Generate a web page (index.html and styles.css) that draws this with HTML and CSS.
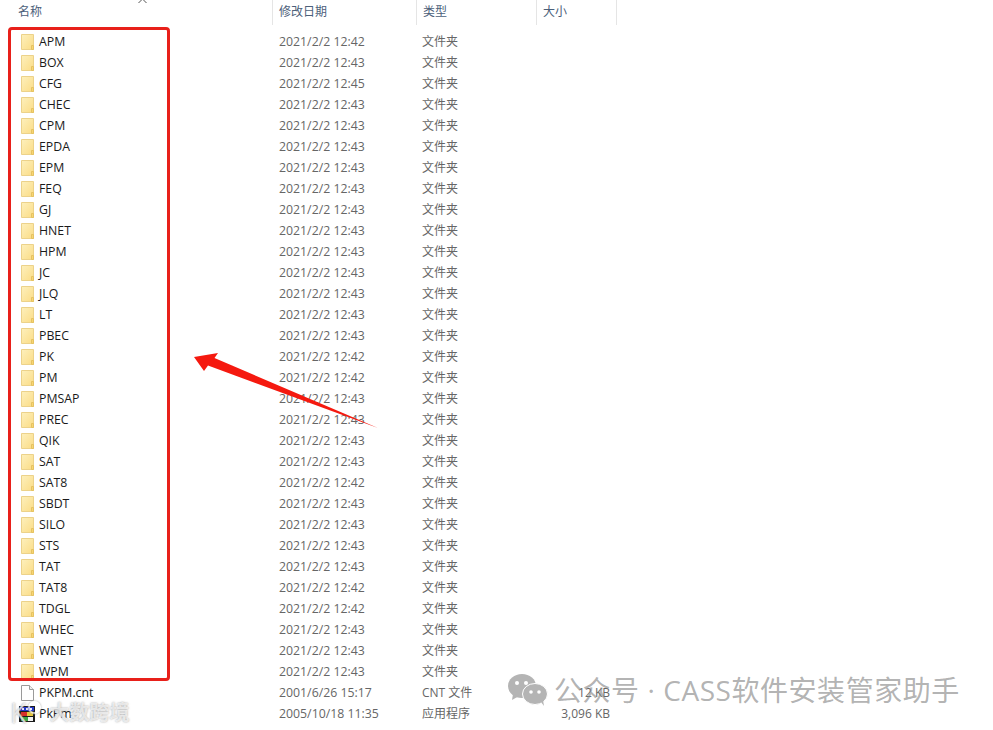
FILE: index.html
```html
<!DOCTYPE html>
<html lang="en">
<head>
    <meta charset="UTF-8">
    <title>PKPM</title>
    <link rel="stylesheet" href="styles.css">
</head>
<body>
    <svg class="defs" width="0" height="0">
        <linearGradient id="folder-fill" x1="0" y1="0" x2="1" y2="1">
            <stop offset="0" stop-color="#fdf0bd"/>
            <stop offset="1" stop-color="#fbdc85"/>
        </linearGradient>
        <symbol id="folder" viewBox="0 0 13 16">
            <path d="M.5.500h12v15H.5z" fill="url(#folder-fill)" stroke="#ecd28a"/>
            <path d="M10.500 15.500v-4h2v4z" fill="#f7d672" stroke="#e6c262"/>
        </symbol>
    </svg>

    <div class="explorer">
        <div class="row head">
            <div class="cell name-head">名称<svg class="sort" width="9" height="5" viewBox="0 0 9 5"><path d="M.5 4l4-4 4 4" fill="none" stroke="#555"/></svg></div>
            <div class="cell">修改日期</div>
            <div class="cell">类型</div>
            <div class="cell last">大小</div>
        </div>

        <div class="row"><div class="name"><svg class="icon"><use href="#folder"/></svg>APM</div><div class="date">2021/2/2 12:42</div><div class="type">文件夹</div></div>
        <div class="row"><div class="name"><svg class="icon"><use href="#folder"/></svg>BOX</div><div class="date">2021/2/2 12:43</div><div class="type">文件夹</div></div>
        <div class="row"><div class="name"><svg class="icon"><use href="#folder"/></svg>CFG</div><div class="date">2021/2/2 12:45</div><div class="type">文件夹</div></div>
        <div class="row"><div class="name"><svg class="icon"><use href="#folder"/></svg>CHEC</div><div class="date">2021/2/2 12:43</div><div class="type">文件夹</div></div>
        <div class="row"><div class="name"><svg class="icon"><use href="#folder"/></svg>CPM</div><div class="date">2021/2/2 12:43</div><div class="type">文件夹</div></div>
        <div class="row"><div class="name"><svg class="icon"><use href="#folder"/></svg>EPDA</div><div class="date">2021/2/2 12:43</div><div class="type">文件夹</div></div>
        <div class="row"><div class="name"><svg class="icon"><use href="#folder"/></svg>EPM</div><div class="date">2021/2/2 12:43</div><div class="type">文件夹</div></div>
        <div class="row"><div class="name"><svg class="icon"><use href="#folder"/></svg>FEQ</div><div class="date">2021/2/2 12:43</div><div class="type">文件夹</div></div>
        <div class="row"><div class="name"><svg class="icon"><use href="#folder"/></svg>GJ</div><div class="date">2021/2/2 12:43</div><div class="type">文件夹</div></div>
        <div class="row"><div class="name"><svg class="icon"><use href="#folder"/></svg>HNET</div><div class="date">2021/2/2 12:43</div><div class="type">文件夹</div></div>
        <div class="row"><div class="name"><svg class="icon"><use href="#folder"/></svg>HPM</div><div class="date">2021/2/2 12:43</div><div class="type">文件夹</div></div>
        <div class="row"><div class="name"><svg class="icon"><use href="#folder"/></svg>JC</div><div class="date">2021/2/2 12:43</div><div class="type">文件夹</div></div>
        <div class="row"><div class="name"><svg class="icon"><use href="#folder"/></svg>JLQ</div><div class="date">2021/2/2 12:43</div><div class="type">文件夹</div></div>
        <div class="row"><div class="name"><svg class="icon"><use href="#folder"/></svg>LT</div><div class="date">2021/2/2 12:43</div><div class="type">文件夹</div></div>
        <div class="row"><div class="name"><svg class="icon"><use href="#folder"/></svg>PBEC</div><div class="date">2021/2/2 12:43</div><div class="type">文件夹</div></div>
        <div class="row"><div class="name"><svg class="icon"><use href="#folder"/></svg>PK</div><div class="date">2021/2/2 12:42</div><div class="type">文件夹</div></div>
        <div class="row"><div class="name"><svg class="icon"><use href="#folder"/></svg>PM</div><div class="date">2021/2/2 12:42</div><div class="type">文件夹</div></div>
        <div class="row"><div class="name"><svg class="icon"><use href="#folder"/></svg>PMSAP</div><div class="date">2021/2/2 12:43</div><div class="type">文件夹</div></div>
        <div class="row"><div class="name"><svg class="icon"><use href="#folder"/></svg>PREC</div><div class="date">2021/2/2 12:43</div><div class="type">文件夹</div></div>
        <div class="row"><div class="name"><svg class="icon"><use href="#folder"/></svg>QIK</div><div class="date">2021/2/2 12:43</div><div class="type">文件夹</div></div>
        <div class="row"><div class="name"><svg class="icon"><use href="#folder"/></svg>SAT</div><div class="date">2021/2/2 12:43</div><div class="type">文件夹</div></div>
        <div class="row"><div class="name"><svg class="icon"><use href="#folder"/></svg>SAT8</div><div class="date">2021/2/2 12:42</div><div class="type">文件夹</div></div>
        <div class="row"><div class="name"><svg class="icon"><use href="#folder"/></svg>SBDT</div><div class="date">2021/2/2 12:43</div><div class="type">文件夹</div></div>
        <div class="row"><div class="name"><svg class="icon"><use href="#folder"/></svg>SILO</div><div class="date">2021/2/2 12:43</div><div class="type">文件夹</div></div>
        <div class="row"><div class="name"><svg class="icon"><use href="#folder"/></svg>STS</div><div class="date">2021/2/2 12:43</div><div class="type">文件夹</div></div>
        <div class="row"><div class="name"><svg class="icon"><use href="#folder"/></svg>TAT</div><div class="date">2021/2/2 12:43</div><div class="type">文件夹</div></div>
        <div class="row"><div class="name"><svg class="icon"><use href="#folder"/></svg>TAT8</div><div class="date">2021/2/2 12:42</div><div class="type">文件夹</div></div>
        <div class="row"><div class="name"><svg class="icon"><use href="#folder"/></svg>TDGL</div><div class="date">2021/2/2 12:42</div><div class="type">文件夹</div></div>
        <div class="row"><div class="name"><svg class="icon"><use href="#folder"/></svg>WHEC</div><div class="date">2021/2/2 12:43</div><div class="type">文件夹</div></div>
        <div class="row"><div class="name"><svg class="icon"><use href="#folder"/></svg>WNET</div><div class="date">2021/2/2 12:43</div><div class="type">文件夹</div></div>
        <div class="row"><div class="name"><svg class="icon"><use href="#folder"/></svg>WPM</div><div class="date">2021/2/2 12:43</div><div class="type">文件夹</div></div>
        <div class="row">
            <div class="name">
                <svg class="icon" viewBox="0 0 13 16"><path d="M.5.500h8l4 4v11H.5z" fill="#fff" stroke="#9a9a9a"/><path d="M8.500.500v4h4" fill="#eee" stroke="#9a9a9a"/></svg>
                PKPM.cnt
            </div>
            <div class="date">2001/6/26 15:17</div>
            <div class="type">CNT 文件</div>
            <div class="size">12 KB</div>
        </div>
        <div class="row">
            <div class="name">
                <svg class="icon app" viewBox="0 0 16 16"><path d="M0 0h16v16H0z" fill="#1b1b1b"/><path d="M1 1h14v4H1z" fill="#2438c8"/><path d="M3 2h2v2H3zM7 2h2v2H7zM11 2h2v2h-2z" fill="#e8e8f8"/><path d="M2 6h6v4H2z" fill="#d8302a"/><path d="M8 6h6v4H8z" fill="#e8c83a"/><path d="M2 11h7v4H2z" fill="#3aa845"/><path d="M9 11h5v4H9z" fill="#f2f2f2"/></svg>
                PkPm
            </div>
            <div class="date">2005/10/18 11:35</div>
            <div class="type">应用程序</div>
            <div class="size">3,096 KB</div>
        </div>
    </div>

    <!-- annotations on top of the screenshot -->
    <div class="red-box"></div>
    <svg class="arrow" width="190" height="80" viewBox="0 0 190 80">
        <path d="M1 4L25 0 21.500 5 185 75 15 12.500 11 18z" fill="#f5190f"/>
    </svg>

    <div class="mark">
        <svg width="40" height="32" viewBox="0 0 40 32">
            <ellipse cx="14" cy="12" rx="14" ry="12" fill="#b4b4b4"/>
            <path d="M5 20l-1 6 7-4z" fill="#b4b4b4"/>
            <ellipse cx="27" cy="20" rx="12.500" ry="10.500" fill="#b4b4b4" stroke="#fff"/>
            <path d="M33 28l3 4-1-6z" fill="#b4b4b4"/>
            <circle cx="9" cy="9" r="2" fill="#fff"/><circle cx="18" cy="9" r="2" fill="#fff"/>
            <circle cx="23" cy="18" r="1.800" fill="#fff"/><circle cx="31" cy="18" r="1.800" fill="#fff"/>
        </svg>
        <span>公众号 · CASS软件安装管家助手</span>
    </div>
    <div class="mark-left"><span class="k">K</span><span class="dot"></span>大数跨境</div>
</body>
</html>
```

FILE: styles.css
```css
body {
    margin: 0;
    height: 730px;
    overflow: hidden;
    position: relative;
    background: #fff;
    font-family: "Open Sans", "Noto Sans CJK SC", sans-serif;
    font-size: 12px;
    color: #666;
}

.defs {
    display: block;
}

.explorer {
    display: flex;
    flex-direction: column;
}

/* Rows */
.row {
    display: grid;
    grid-template-columns: 272px 144px 120px 81px;
    height: 21px;
    line-height: 21px;
}

.head {
    height: 25px;
    line-height: 23px;
    margin-bottom: 6px;
    color: #4c607a;
}

.cell {
    padding-left: 6px;
    border-left: 1px solid #e5e5e5;
}

.cell.last {
    border-right: 1px solid #e5e5e5;
}

.name-head {
    position: relative;
    padding-left: 18px;
    border-left: none;
}

.sort {
    position: absolute;
    left: 138px;
    top: -1px;
}

.name {
    display: flex;
    align-items: center;
    gap: 5px;
    padding-left: 21px;
    color: #1a1a1a;
    font-size: 12.3px;
}

.icon {
    width: 13px;
    height: 16px;
    flex-shrink: 0;
}

.icon.app {
    width: 16px;
    margin-left: -2px;
    margin-right: -1px;
}

.date {
    padding-left: 7px;
    font-size: 12.3px;
}

.type {
    padding-left: 6px;
}

.size {
    padding-right: 7px;
    text-align: right;
}

/* Annotations */
.red-box {
    position: absolute;
    left: 8px;
    top: 27px;
    width: 156px;
    height: 648px;
    border: 3px solid #e8201a;
    border-radius: 4px;
}

.arrow {
    position: absolute;
    left: 193px;
    top: 353px;
}

.mark {
    position: absolute;
    left: 508px;
    top: 673px;
    display: flex;
    align-items: center;
    gap: 6px;
    font-size: 28px;
    line-height: 34px;
    letter-spacing: 0.55px;
    color: rgba(130, 130, 130, 0.62);
    white-space: nowrap;
}

.mark-left {
    position: absolute;
    left: 10px;
    top: 700px;
    display: flex;
    align-items: center;
    font-size: 20px;
    line-height: 26px;
    font-weight: 700;
    color: rgba(255, 255, 255, 0.7);
    text-shadow: 0 0 2px rgba(120, 120, 120, 0.7);
    white-space: nowrap;
}

.k {
    font-size: 27px;
    font-weight: 400;
}

.dot {
    width: 9px;
    height: 9px;
    margin: -12px 9px 0 1px;
    border: 2px solid rgba(255, 255, 255, 0.7);
    border-radius: 50%;
    box-shadow: 0 0 2px #999;
}
```
